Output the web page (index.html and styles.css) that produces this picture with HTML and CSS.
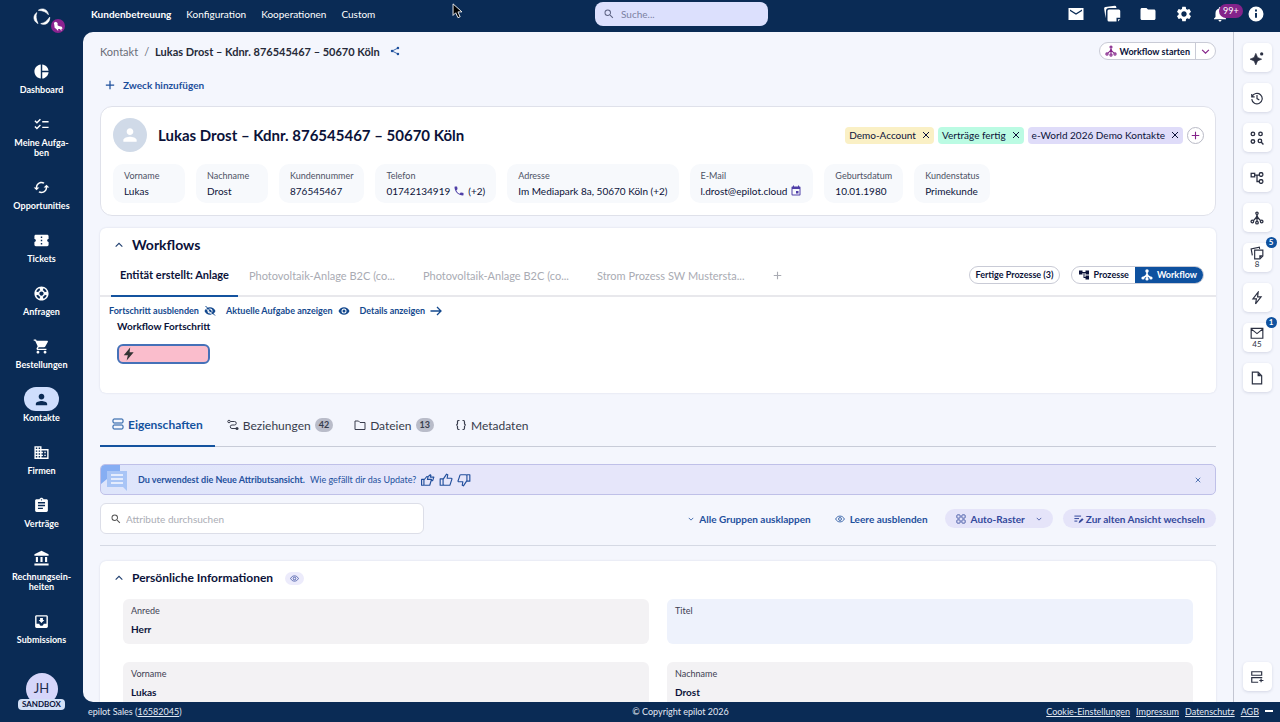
FILE: index.html
```html
<!DOCTYPE html>
<html lang="de">
<head>
  <meta charset="UTF-8" />
  <meta name="viewport" content="width=device-width, initial-scale=1.0"/>
  <title>Lukas Drost – epilot</title>
  <link rel="stylesheet" href="styles.css">
</head>
<body>

  <svg class="sprite" aria-hidden="true">
    <symbol id="i-pie" viewBox="0 0 24 24"><path d="M11 2v20c-5.070-.5-9-4.790-9-10s3.930-9.500 9-10zm2.030 0v8.990H22c-.47-4.740-4.240-8.520-8.970-8.990zm0 11.010V22c4.740-.47 8.500-4.250 8.970-8.990h-8.970z"/></symbol>
    <symbol id="i-checklist" viewBox="0 0 24 24"><path d="M22 7h-9v2h9V7zm0 8h-9v2h9v-2zM5.540 11L2 7.460l1.410-1.410 2.120 2.120 4.240-4.240 1.410 1.410L5.540 11zm0 8L2 15.460l1.410-1.410 2.120 2.120 4.240-4.240 1.410 1.410L5.540 19z"/></symbol>
    <symbol id="i-cycle" viewBox="0 0 24 24"><path d="M19 8l-4 4h3c0 3.310-2.690 6-6 6-1.010 0-1.970-.25-2.800-.7l-1.460 1.460C8.970 19.540 10.430 20 12 20c4.420 0 8-3.580 8-8h3l-4-4zM6 12c0-3.310 2.690-6 6-6 1.010 0 1.970.25 2.800.7l1.460-1.460C15.030 4.460 13.570 4 12 4c-4.420 0-8 3.580-8 8H1l4 4 4-4H6z"/></symbol>
    <symbol id="i-ticket" viewBox="0 0 24 24"><path d="M22 10V6c0-1.110-.9-2-2-2H4c-1.100 0-1.990.89-1.990 2v4c1.100 0 1.990.9 1.990 2s-.89 2-2 2v4c0 1.100.9 2 2 2h16c1.100 0 2-.9 2-2v-4c-1.100 0-2-.9-2-2s.9-2 2-2zm-9 7.500h-2v-2h2v2zm0-4.500h-2v-2h2v2zm0-4.500h-2v-2h2v2z"/></symbol>
    <symbol id="i-support" viewBox="0 0 24 24"><path d="M12 2C6.480 2 2 6.480 2 12s4.480 10 10 10 10-4.480 10-10S17.520 2 12 2zm7.460 7.120l-2.780 1.150c-.51-1.360-1.580-2.440-2.950-2.940l1.150-2.780c2.100.8 3.770 2.470 4.580 4.570zM12 15c-1.660 0-3-1.340-3-3s1.340-3 3-3 3 1.340 3 3-1.340 3-3 3zM9.130 4.540l1.170 2.780c-1.380.5-2.470 1.590-2.980 2.970L4.540 9.130c.81-2.110 2.480-3.780 4.590-4.590zM4.540 14.870l2.780-1.150c.51 1.380 1.590 2.460 2.970 2.960l-1.170 2.780c-2.100-.81-3.770-2.480-4.580-4.590zm10.340 4.590l-1.150-2.780c1.370-.51 2.450-1.590 2.950-2.970l2.780 1.170c-.81 2.100-2.480 3.770-4.580 4.580z"/></symbol>
    <symbol id="i-cart" viewBox="0 0 24 24"><path d="M7 18c-1.100 0-1.990.9-1.990 2S5.900 22 7 22s2-.9 2-2-.9-2-2-2zM1 2v2h2l3.600 7.590-1.350 2.450c-.16.28-.25.61-.25.960 0 1.100.9 2 2 2h12v-2H7.420c-.14 0-.25-.11-.25-.25l.03-.12.900-1.630h7.450c.75 0 1.410-.41 1.750-1.030l3.580-6.490A1 1 0 0 0 20 4H5.210l-.94-2H1zm16 16c-1.100 0-1.990.9-1.990 2s.89 2 1.990 2 2-.9 2-2-.9-2-2-2z"/></symbol>
    <symbol id="i-person" viewBox="0 0 24 24"><path d="M12 12c2.210 0 4-1.790 4-4s-1.790-4-4-4-4 1.790-4 4 1.790 4 4 4zm0 2c-2.670 0-8 1.340-8 4v2h16v-2c0-2.660-5.330-4-8-4z"/></symbol>
    <symbol id="i-building" viewBox="0 0 24 24"><path d="M12 7V3H2v18h20V7H12zM6 19H4v-2h2v2zm0-4H4v-2h2v2zm0-4H4V9h2v2zm0-4H4V5h2v2zm4 12H8v-2h2v2zm0-4H8v-2h2v2zm0-4H8V9h2v2zm0-4H8V5h2v2zm10 12h-8v-2h2v-2h-2v-2h2v-2h-2V9h8v10zm-2-8h-2v2h2v-2zm0 4h-2v2h2v-2z"/></symbol>
    <symbol id="i-clipboard" viewBox="0 0 24 24"><path d="M19 3h-4.180C14.400 1.840 13.300 1 12 1s-2.400.84-2.820 2H5c-1.100 0-2 .9-2 2v14c0 1.100.9 2 2 2h14c1.100 0 2-.9 2-2V5c0-1.100-.9-2-2-2zm-7 0c.55 0 1 .45 1 1s-.45 1-1 1-1-.45-1-1 .45-1 1-1zm2 14H7v-2h7v2zm3-4H7v-2h10v2zm0-4H7V7h10v2z"/></symbol>
    <symbol id="i-bank" viewBox="0 0 24 24"><path d="M4 10v7h3v-7H4zm6.500 0v7h3v-7h-3zM2 22h20v-3H2v3zm15-12v7h3v-7h-3zm-5-9L2 6v2h20V6l-10-5z"/></symbol>
    <symbol id="i-inbox" viewBox="0 0 24 24"><path d="M19 3H4.990C3.880 3 3 3.900 3 5v14c0 1.100.88 2 1.990 2H19c1.100 0 2-.9 2-2V5c0-1.100-.9-2-2-2zm0 12h-4c0 1.660-1.340 3-3 3s-3-1.340-3-3H4.990V5H19v10zm-3-5h-2V7h-4v3H8l4 4 4-4z"/></symbol>
    <symbol id="i-search" viewBox="0 0 24 24"><path d="M15.500 14h-.79l-.28-.27A6.470 6.470 0 0 0 16 9.500 6.500 6.500 0 1 0 9.500 16c1.610 0 3.090-.59 4.230-1.570l.27.28v.79l5 4.990L20.490 19l-4.990-5zm-6 0C7.010 14 5 11.990 5 9.500S7.010 5 9.500 5 14 7.010 14 9.500 11.990 14 9.500 14z"/></symbol>
    <symbol id="i-mail-fill" viewBox="0 0 24 24"><path d="M22 4H2v16h20V4zm-2 4l-8 5-8-5V6l8 5 8-5v2z"/></symbol>
    <symbol id="i-notes-fill" viewBox="0 0 24 24"><path d="M3.500 17.500L1.500 5a2 2 0 0 1 1.700-2.300L15.500 1a2 2 0 0 1 2.200 1.700l.2 1.300H8a4 4 0 0 0-4 4z"/><path d="M8 6h13a2 2 0 0 1 2 2v9h-5v5H8a2 2 0 0 1-2-2V8a2 2 0 0 1 2-2zm12 13h3l-3 3z"/></symbol>
    <symbol id="i-folder-fill" viewBox="0 0 24 24"><path d="M10 4H4c-1.100 0-1.990.9-1.990 2L2 18c0 1.100.9 2 2 2h16c1.100 0 2-.9 2-2V8c0-1.100-.9-2-2-2h-8l-2-2z"/></symbol>
    <symbol id="i-gear" viewBox="0 0 24 24"><path d="M19.140 12.940c.04-.3.060-.61.060-.94 0-.32-.02-.64-.07-.94l2.030-1.580a.49.49 0 0 0 .12-.61l-1.920-3.320a.488.488 0 0 0-.59-.22l-2.390.960c-.5-.38-1.030-.7-1.620-.94l-.36-2.540a.484.484 0 0 0-.48-.41h-3.840c-.24 0-.43.17-.47.41l-.36 2.540c-.59.24-1.130.57-1.620.94l-2.390-.96c-.22-.08-.47 0-.59.22L2.740 8.870c-.12.21-.08.47.12.61l2.030 1.580c-.05.3-.09.63-.09.94s.02.64.070.94l-2.030 1.580a.49.49 0 0 0-.12.61l1.920 3.320c.12.22.37.29.59.22l2.390-.96c.5.38 1.030.7 1.620.94l.36 2.540c.05.24.24.41.48.41h3.840c.24 0 .44-.17.47-.41l.36-2.540c.59-.24 1.130-.56 1.620-.94l2.390.960c.22.080.47 0 .59-.22l1.920-3.320c.12-.22.070-.47-.12-.61l-2.010-1.580zM12 15.600c-1.980 0-3.600-1.620-3.600-3.600s1.620-3.600 3.600-3.600 3.600 1.620 3.600 3.600-1.620 3.600-3.600 3.600z"/></symbol>
    <symbol id="i-bell" viewBox="0 0 24 24"><path d="M12 22c1.100 0 2-.9 2-2h-4c0 1.100.89 2 2 2zm6-6v-5c0-3.070-1.640-5.640-4.500-6.320V4c0-.83-.67-1.500-1.500-1.500s-1.500.67-1.500 1.500v.68C7.630 5.360 6 7.920 6 11v5l-2 2v1h16v-1l-2-2z"/></symbol>
    <symbol id="i-info" viewBox="0 0 24 24"><path d="M12 2a10 10 0 1 0 0 20 10 10 0 0 0 0-20zm1.300 15h-2.600v-6.500h2.600V17zm0-8.500h-2.600V6h2.600v2.500z"/></symbol>
    <symbol id="i-share" viewBox="0 0 24 24"><path d="M5 12L19 5M5 12l14 7" fill="none" stroke="currentColor" stroke-width="2"/><circle cx="5" cy="12" r="3"/><circle cx="19" cy="5" r="3"/><circle cx="19" cy="19" r="3"/></symbol>
    <symbol id="i-plus" viewBox="0 0 24 24"><path d="M12 2v20M2 12h20" fill="none" stroke="currentColor" stroke-width="3"/></symbol>
    <symbol id="i-fork" viewBox="0 0 24 24"><g fill="none" stroke="currentColor" stroke-width="2.200"><path d="M12 7v10M12 7c0 5-3.500 7-6 9M12 7c0 5 3.500 7 6 9"/><circle cx="12" cy="4" r="2"/><circle cx="4" cy="18" r="2.200"/><circle cx="20" cy="18" r="2.200"/><circle cx="12" cy="20" r="2.200"/></g></symbol>
    <symbol id="i-fork-fill" viewBox="0 0 24 24"><path d="M12 4v16M12 9c0 4-3 6-7 8M12 9c0 4 3 6 7 8" fill="none" stroke="currentColor" stroke-width="3"/><circle cx="12" cy="4" r="3.500"/><circle cx="4" cy="18" r="3.200"/><circle cx="20" cy="18" r="3.200"/><circle cx="12" cy="20" r="3.200"/></symbol>
    <symbol id="i-down" viewBox="0 0 24 24"><path d="M3 7.500l9 9 9-9" fill="none" stroke="currentColor" stroke-width="3.200"/></symbol>
    <symbol id="i-up" viewBox="0 0 24 24"><path d="M4 16l8-8 8 8" fill="none" stroke="currentColor" stroke-width="2.600"/></symbol>
    <symbol id="i-x" viewBox="0 0 24 24"><path d="M3 3l18 18M21 3L3 21" fill="none" stroke="currentColor" stroke-width="3"/></symbol>
    <symbol id="i-phone" viewBox="0 0 24 24"><path d="M6.620 10.790c1.440 2.830 3.760 5.140 6.590 6.590l2.200-2.200c.27-.27.67-.36 1.020-.24 1.120.37 2.330.57 3.570.57.55 0 1 .45 1 1V20c0 .55-.45 1-1 1-9.390 0-17-7.610-17-17 0-.55.45-1 1-1h3.500c.55 0 1 .45 1 1 0 1.250.2 2.450.57 3.570.11.35.030.74-.25 1.020l-2.200 2.200z"/></symbol>
    <symbol id="i-calendar" viewBox="0 0 24 24"><path d="M17 12h-5v5h5v-5zM16 1v2H8V1H6v2H5c-1.110 0-1.990.9-1.990 2L3 19a2 2 0 0 0 2 2h14c1.100 0 2-.9 2-2V5c0-1.100-.9-2-2-2h-1V1h-2zm3 18H5V8h14v11z"/></symbol>
    <symbol id="i-tree-fill" viewBox="0 0 24 24"><path d="M22 11V3h-7v3H9V3H2v8h7V8h2v10h4v3h7v-8h-7v3h-2V8h2v3z"/></symbol>
    <symbol id="i-tree" viewBox="0 0 24 24"><g fill="none" stroke="currentColor" stroke-width="2.200"><rect x="2" y="4" width="6" height="6"/><rect x="16" y="3" width="6" height="6" rx="2"/><rect x="16" y="15" width="6" height="6" rx="2"/><path d="M8 7h8M12 7v11h4"/></g></symbol>
    <symbol id="i-eye" viewBox="0 0 24 24"><path d="M12 4.500C7 4.500 2.730 7.610 1 12c1.730 4.390 6 7.500 11 7.500s9.270-3.110 11-7.500c-1.730-4.390-6-7.500-11-7.500zM12 17a5 5 0 1 1 0-10 5 5 0 0 1 0 10zm0-8a3 3 0 1 0 0 6 3 3 0 0 0 0-6z"/></symbol>
    <symbol id="i-eye-off" viewBox="0 0 24 24"><path d="M12 4.500C7 4.500 2.730 7.610 1 12c1.730 4.390 6 7.500 11 7.500s9.270-3.110 11-7.500c-1.730-4.390-6-7.500-11-7.500zM12 17a5 5 0 1 1 0-10 5 5 0 0 1 0 10zm0-8a3 3 0 1 0 0 6 3 3 0 0 0 0-6z"/><path d="M1 4l19 19" stroke="#fff" stroke-width="2"/><path d="M3 2l19 19" stroke="currentColor" stroke-width="2"/></symbol>
    <symbol id="i-eye-line" viewBox="0 0 24 24"><g fill="none" stroke="currentColor" stroke-width="2"><path d="M1.500 12C4 7 8 5 12 5s8 2 10.500 7c-2.500 5-6.500 7-10.500 7S4 17 1.500 12z"/><circle cx="12" cy="12" r="3.500"/></g></symbol>
    <symbol id="i-arrow" viewBox="0 0 24 24"><path d="M1 12h21M14 4l8 8-8 8" fill="none" stroke="currentColor" stroke-width="2.600"/></symbol>
    <symbol id="i-bolt-fill" viewBox="0 0 24 24"><path d="M14 1L3 14h7l-2 9L20 9h-7z"/></symbol>
    <symbol id="i-bolt" viewBox="0 0 24 24"><path d="M14 2L5 13.500h6L9.500 22 19 10h-6z" fill="none" stroke="currentColor" stroke-width="2"/></symbol>
    <symbol id="i-rows" viewBox="0 0 24 24"><g fill="none" stroke="currentColor" stroke-width="2"><rect x="2" y="2" width="20" height="8" rx="2"/><rect x="2" y="14" width="20" height="8" rx="2"/></g></symbol>
    <symbol id="i-route" viewBox="0 0 24 24"><g fill="none" stroke="currentColor" stroke-width="2"><circle cx="4" cy="5" r="2.500"/><path d="M7 5h8a3.500 3.500 0 0 1 0 7H10a3.500 3.500 0 0 0 0 7h8"/></g><circle cx="20" cy="19" r="3"/></symbol>
    <symbol id="i-folder" viewBox="0 0 24 24"><path d="M2 4h7l3 3h10v14H2z" fill="none" stroke="currentColor" stroke-width="2" stroke-linejoin="round"/></symbol>
    <symbol id="i-braces" viewBox="0 0 24 24"><path d="M9 3H7C5 3 5 4 5 6v3c0 2-1 3-3 3 2 0 3 1 3 3v3c0 2 0 3 2 3h2M15 3h2c2 0 2 1 2 3v3c0 2 1 3 3 3-2 0-3 1-3 3v3c0 2 0 3-2 3h-2" fill="none" stroke="currentColor" stroke-width="2.400"/></symbol>
    <symbol id="i-thumb" viewBox="0 0 24 24"><path d="M2 10h5v11H2zM7 11l6-9 2 1-1 6h7c1 0 1.500 1 1 2l-3 9c0 1-1 1-2 1H9l-2-1" fill="none" stroke="currentColor" stroke-width="2" stroke-linejoin="round"/></symbol>
    <symbol id="i-thumb-down" viewBox="0 0 24 24"><path d="M22 14h-5V3h5zM17 13l-6 9-2-1 1-6H3c-1 0-1.500-1-1-2l3-9c0-1 1-1 2-1h8l2 1" fill="none" stroke="currentColor" stroke-width="2" stroke-linejoin="round"/></symbol>
    <symbol id="i-thumbs" viewBox="0 0 24 24"><path d="M1 11h4v10H1zM5 12l5-6 2 1-1 4h7l-3 10H6M11 7l5-4 1 1-1 3h6l-2 6h-3" fill="none" stroke="currentColor" stroke-width="2" stroke-linejoin="round"/></symbol>
    <symbol id="i-grid" viewBox="0 0 24 24"><g fill="none" stroke="currentColor" stroke-width="2"><rect x="2" y="2" width="8" height="8" rx="2"/><rect x="14" y="2" width="8" height="8" rx="2"/><rect x="2" y="14" width="8" height="8" rx="2"/><rect x="14" y="14" width="8" height="8" rx="2"/></g></symbol>
    <symbol id="i-edit-list" viewBox="0 0 24 24"><path d="M1 5h16M1 11h11M1 17h7" fill="none" stroke="currentColor" stroke-width="2.400"/><path d="M11 22l1.500-5 7-7 3.500 3-7 7z"/></symbol>
    <symbol id="i-spark" viewBox="0 0 24 24"><path d="M10 4l3 7 7 3-7 3-3 7-3-7-7-3 7-3z" stroke="currentColor"/><circle cx="20" cy="5" r="2.800"/></symbol>
    <symbol id="i-history" viewBox="0 0 24 24"><path d="M3 5v5h5M3.500 10a9 9 0 1 1-.5 4M12 7v6l4 2.500" fill="none" stroke="currentColor" stroke-width="2"/></symbol>
    <symbol id="i-circles" viewBox="0 0 24 24"><g fill="none" stroke="currentColor" stroke-width="2.400"><circle cx="5" cy="5" r="3"/><circle cx="18" cy="5" r="3"/><circle cx="5" cy="18" r="3"/><circle cx="17" cy="17" r="3"/><path d="M19 19l4 4"/></g></symbol>
    <symbol id="i-notes" viewBox="0 0 24 24"><g fill="none" stroke="currentColor" stroke-width="2"><path d="M4 16L2 5l14-3 .5 3M8 7h14v10l-5 5H8z"/></g><path d="M16 16h6l-6 6z"/></symbol>
    <symbol id="i-mail" viewBox="0 0 24 24"><path d="M2 4h20v17H2zM2 5l10 8 10-8" fill="none" stroke="currentColor" stroke-width="2"/></symbol>
    <symbol id="i-file" viewBox="0 0 24 24"><path d="M4 2h10l6 6v14H4z" fill="none" stroke="currentColor" stroke-width="2"/><path d="M13 2v7h7z"/></symbol>
    <symbol id="i-row-add" viewBox="0 0 24 24"><path d="M3 3h17v6H3zM20 13H3v8h11M3 13h18M19 15v6M16 18h7" fill="none" stroke="currentColor" stroke-width="2"/></symbol>
  </svg>

  <div class="app">
    <aside class="sidebar">
      <a href="#" class="logo" aria-label="epilot">
        <svg viewBox="0 0 24 24" fill="#fff"><path id="blade" d="M7 3C13-1 20 2 20.500 9C17.500 5 13 3.500 7 3z" stroke="#fff" stroke-width=".8" stroke-linejoin="round"/><use href="#blade" transform="rotate(120 12 12)"/><use href="#blade" transform="rotate(240 12 12)"/></svg>
        <span class="logo-badge"><svg viewBox="0 0 24 24"><path d="M2 4l5-2 4 3v5l3 2 7 2 2 4-3 1 1 4h-2l-2-4h-5l1 4h-2l-3-4-4-3-1-7z" fill="#fff"/></svg></span>
      </a>
      <nav class="side-nav">
        <a href="#"><span class="pill"><svg class="icon"><use href="#i-pie"/></svg></span>Dashboard</a>
        <a href="#"><span class="pill"><svg class="icon"><use href="#i-checklist"/></svg></span>Meine Aufga-<br>ben</a>
        <a href="#"><span class="pill"><svg class="icon"><use href="#i-cycle"/></svg></span>Opportunities</a>
        <a href="#"><span class="pill"><svg class="icon"><use href="#i-ticket"/></svg></span>Tickets</a>
        <a href="#"><span class="pill"><svg class="icon"><use href="#i-support"/></svg></span>Anfragen</a>
        <a href="#"><span class="pill"><svg class="icon"><use href="#i-cart"/></svg></span>Bestellungen</a>
        <a href="#" class="active"><span class="pill"><svg class="icon"><use href="#i-person"/></svg></span>Kontakte</a>
        <a href="#"><span class="pill"><svg class="icon"><use href="#i-building"/></svg></span>Firmen</a>
        <a href="#"><span class="pill"><svg class="icon"><use href="#i-clipboard"/></svg></span>Verträge</a>
        <a href="#"><span class="pill"><svg class="icon"><use href="#i-bank"/></svg></span>Rechnungsein-<br>heiten</a>
        <a href="#"><span class="pill"><svg class="icon"><use href="#i-inbox"/></svg></span>Submissions</a>
      </nav>
      <button class="account"><span class="initials">JH</span><span class="sandbox">SANDBOX</span></button>
    </aside>

    <div class="page">
      <header class="topbar">
        <nav class="top-nav">
          <a href="#" class="active">Kundenbetreuung</a>
          <a href="#">Konfiguration</a>
          <a href="#">Kooperationen</a>
          <a href="#">Custom</a>
        </nav>
        <label class="search">
          <svg class="icon"><use href="#i-search"/></svg>
          <input type="search" placeholder="Suche..." aria-label="Suche">
        </label>
        <div class="top-actions">
          <button aria-label="Nachrichten"><svg class="icon"><use href="#i-mail-fill"/></svg></button>
          <button aria-label="Notizen"><svg class="icon"><use href="#i-notes-fill"/></svg></button>
          <button aria-label="Dateien"><svg class="icon"><use href="#i-folder-fill"/></svg></button>
          <button aria-label="Einstellungen"><svg class="icon"><use href="#i-gear"/></svg></button>
          <button aria-label="Benachrichtigungen"><svg class="icon"><use href="#i-bell"/></svg><span class="alert-count">99+</span></button>
          <button aria-label="Info"><svg class="icon"><use href="#i-info"/></svg></button>
        </div>
      </header>

      <div class="workspace">
        <main class="content">
          <div class="crumb-row">
            <div class="crumbs"><a href="#">Kontakt</a><span class="slash">/</span><strong>Lukas Drost – Kdnr. 876545467 – 50670 Köln</strong><button class="share" aria-label="Teilen"><svg class="icon"><use href="#i-share"/></svg></button></div>
            <div class="split">
              <button><svg class="icon"><use href="#i-fork"/></svg>Workflow starten</button>
              <button aria-label="Mehr"><svg class="icon"><use href="#i-down"/></svg></button>
            </div>
          </div>
          <button class="add-purpose"><svg class="icon"><use href="#i-plus"/></svg>Zweck hinzufügen</button>

          <section class="card contact">
            <div class="contact-head">
              <span class="avatar"><svg class="icon"><use href="#i-person"/></svg></span>
              <h1>Lukas Drost – Kdnr. 876545467 – 50670 Köln</h1>
              <div class="tags">
                <span class="tag yellow">Demo-Account <button aria-label="Demo-Account entfernen"><svg class="icon"><use href="#i-x"/></svg></button></span>
                <span class="tag green">Verträge fertig <button aria-label="Verträge fertig entfernen"><svg class="icon"><use href="#i-x"/></svg></button></span>
                <span class="tag violet">e-World 2026 Demo Kontakte <button aria-label="e-World entfernen"><svg class="icon"><use href="#i-x"/></svg></button></span>
                <button class="tag-add" aria-label="Tag hinzufügen"><svg class="icon"><use href="#i-plus"/></svg></button>
              </div>
            </div>
            <dl class="facts">
              <div><dt>Vorname</dt><dd>Lukas</dd></div>
              <div><dt>Nachname</dt><dd>Drost</dd></div>
              <div><dt>Kundennummer</dt><dd>876545467</dd></div>
              <div><dt>Telefon</dt><dd>01742134919 <svg class="icon"><use href="#i-phone"/></svg> (+2)</dd></div>
              <div><dt>Adresse</dt><dd>Im Mediapark 8a, 50670 Köln (+2)</dd></div>
              <div><dt>E-Mail</dt><dd>l.drost@epilot.cloud <svg class="icon"><use href="#i-calendar"/></svg></dd></div>
              <div><dt>Geburtsdatum</dt><dd>10.01.1980</dd></div>
              <div><dt>Kundenstatus</dt><dd>Primekunde</dd></div>
            </dl>
          </section>

          <section class="card workflows">
            <button class="section-head"><svg class="icon"><use href="#i-up"/></svg>Workflows</button>
            <div class="flow-bar">
              <div class="flow-tabs">
                <button class="active">Entität erstellt: Anlage</button>
                <button>Photovoltaik-Anlage B2C (co...</button>
                <button>Photovoltaik-Anlage B2C (co...</button>
                <button>Strom Prozess SW Mustersta...</button>
                <button class="flow-add" aria-label="Workflow hinzufügen"><svg class="icon"><use href="#i-plus"/></svg></button>
              </div>
              <div class="flow-actions">
                <button class="done">Fertige Prozesse (3)</button>
                <div class="toggle">
                  <button><svg class="icon"><use href="#i-tree-fill"/></svg>Prozesse</button>
                  <button class="active"><svg class="icon"><use href="#i-fork-fill"/></svg>Workflow</button>
                </div>
              </div>
            </div>
            <div class="flow-links">
              <button>Fortschritt ausblenden <svg class="icon"><use href="#i-eye-off"/></svg></button>
              <button>Aktuelle Aufgabe anzeigen <svg class="icon"><use href="#i-eye"/></svg></button>
              <button>Details anzeigen <svg class="icon"><use href="#i-arrow"/></svg></button>
            </div>
            <h3>Workflow Fortschritt</h3>
            <div class="progress"><svg class="icon"><use href="#i-bolt-fill"/></svg></div>
          </section>

          <nav class="tabs">
            <a href="#" class="active"><svg class="icon"><use href="#i-rows"/></svg>Eigenschaften</a>
            <a href="#"><svg class="icon"><use href="#i-route"/></svg>Beziehungen<span class="count">42</span></a>
            <a href="#"><svg class="icon"><use href="#i-folder"/></svg>Dateien<span class="count">13</span></a>
            <a href="#"><svg class="icon"><use href="#i-braces"/></svg>Metadaten</a>
          </nav>

          <div class="banner">
            <svg class="banner-art" viewBox="0 0 28 30"><path d="M0 3a3 3 0 0 1 3-3h16v14H6l-6 5z" fill="#86aef3"/><path d="M6 6h20v20l-4-4H6z" fill="#a9c5f6"/><path d="M10 10h12M10 14h12M10 18h12" stroke="#e4ecfd" stroke-width="2"/></svg>
            <strong>Du verwendest die Neue Attributsansicht.</strong>
            <span>Wie gefällt dir das Update?</span>
            <div class="votes">
              <button aria-label="Sehr gut"><svg class="icon"><use href="#i-thumbs"/></svg></button>
              <button aria-label="Gut"><svg class="icon"><use href="#i-thumb"/></svg></button>
              <button aria-label="Schlecht"><svg class="icon"><use href="#i-thumb-down"/></svg></button>
            </div>
            <button class="close" aria-label="Schließen"><svg class="icon"><use href="#i-x"/></svg></button>
          </div>

          <div class="tools">
            <label class="attr-search">
              <svg class="icon"><use href="#i-search"/></svg>
              <input type="search" placeholder="Attribute durchsuchen" aria-label="Attribute durchsuchen">
            </label>
            <div class="tool-buttons">
              <button><svg class="icon small"><use href="#i-down"/></svg>Alle Gruppen ausklappen</button>
              <button><svg class="icon"><use href="#i-eye-line"/></svg>Leere ausblenden</button>
              <button class="filled"><svg class="icon"><use href="#i-grid"/></svg>Auto-Raster<svg class="icon small"><use href="#i-down"/></svg></button>
              <button class="filled tight"><svg class="icon"><use href="#i-edit-list"/></svg>Zur alten Ansicht wechseln</button>
            </div>
          </div>

          <section class="card personal">
            <div class="personal-head">
              <button class="section-head"><svg class="icon"><use href="#i-up"/></svg>Persönliche Informationen</button>
              <button class="view" aria-label="Anzeigen"><svg class="icon"><use href="#i-eye-line"/></svg></button>
            </div>
            <div class="fields">
              <label class="field">Anrede<input type="text" value="Herr" readonly></label>
              <label class="field empty">Titel<input type="text" value="" readonly></label>
              <label class="field">Vorname<input type="text" value="Lukas" readonly></label>
              <label class="field">Nachname<input type="text" value="Drost" readonly></label>
            </div>
          </section>
        </main>

        <aside class="rail">
          <button aria-label="Assistent"><svg class="icon"><use href="#i-spark"/></svg></button>
          <button aria-label="Verlauf"><svg class="icon"><use href="#i-history"/></svg></button>
          <button aria-label="Apps"><svg class="icon"><use href="#i-circles"/></svg></button>
          <button aria-label="Prozesse"><svg class="icon"><use href="#i-tree"/></svg></button>
          <button aria-label="Workflows"><svg class="icon"><use href="#i-fork"/></svg></button>
          <button aria-label="Notizen"><svg class="icon"><use href="#i-notes"/></svg>8<span class="dot">5</span></button>
          <button aria-label="Automatisierung"><svg class="icon"><use href="#i-bolt"/></svg></button>
          <button aria-label="E-Mails"><svg class="icon"><use href="#i-mail"/></svg>45<span class="dot">1</span></button>
          <button aria-label="Dokumente"><svg class="icon"><use href="#i-file"/></svg></button>
          <button class="last" aria-label="Layout"><svg class="icon"><use href="#i-row-add"/></svg></button>
        </aside>
      </div>

      <footer class="footer">
        <span>epilot Sales (<a href="#">16582045</a>)</span>
        <span>© Copyright epilot 2026</span>
        <nav>
          <a href="#">Cookie-Einstellungen</a>
          <a href="#">Impressum</a>
          <a href="#">Datenschutz</a>
          <a href="#">AGB</a>
          <button class="minimize" aria-label="Minimieren"></button>
        </nav>
      </footer>
    </div>
  </div>

  <svg class="cursor" viewBox="0 0 12 18"><path d="M1 1v13l3-3 2.500 5.500 2.500-1L6.500 10H11z" fill="#000" stroke="#fff"/></svg>

</body>
</html>
```
FILE: styles.css
```css
* {
  box-sizing: border-box;
}

body {
  margin: 0;
  font-family: Lato, "Open Sans", sans-serif;
  font-size: 10px;
  color: #0b1239;
  background-color: #0a2b55;
}

button,
input {
  font: inherit;
  color: inherit;
  border: none;
  background: none;
  padding: 0;
  min-width: 0;
}

button {
  display: flex;
  align-items: center;
  cursor: pointer;
  white-space: nowrap;
}

a {
  color: inherit;
  text-decoration: none;
}

h1, h3, dl, dd {
  margin: 0;
}

.sprite {
  display: none;
}

.icon {
  width: 12px;
  height: 12px;
  fill: currentColor;
  flex-shrink: 0;
}

.cursor {
  position: absolute;
  top: 3px;
  left: 452px;
  width: 11px;
  height: 16px;
}

.app {
  display: flex;
  height: 100vh;
  overflow: hidden;
}

/* sidebar */
.sidebar {
  width: 83px;
  flex-shrink: 0;
  display: flex;
  flex-direction: column;
  align-items: center;
  padding: 8px 0 12px;
  color: #fff;
}

.logo {
  position: relative;
  height: 51px;
}

.logo > svg {
  width: 18px;
  height: 18px;
  overflow: visible;
}

.logo-badge {
  position: absolute;
  top: 11px;
  left: 18px;
  width: 14px;
  height: 14px;
  padding: 2px;
  border-radius: 50%;
  background-color: #8b2390;
  display: flex;
}

.side-nav {
  display: flex;
  flex-direction: column;
  gap: 17px;
}

.side-nav a {
  display: flex;
  flex-direction: column;
  align-items: center;
  font-size: 9px;
  font-weight: bold;
  line-height: 10px;
  text-align: center;
}

.side-nav .pill {
  width: 35px;
  height: 24px;
  margin-bottom: 2px;
  border-radius: 12px;
  display: flex;
  align-items: center;
  justify-content: center;
}

.side-nav .icon {
  width: 17px;
  height: 17px;
}

.side-nav .active .pill {
  background-color: #cfdefd;
  color: #0a2b55;
}

.account {
  margin-top: auto;
  flex-direction: column;
}

.initials {
  width: 32px;
  height: 32px;
  border-radius: 50%;
  background-color: #d6d6fa;
  color: #1f2b4d;
  font-size: 13px;
  line-height: 30px;
}

.sandbox {
  margin-top: -6px;
  padding: 0 4px;
  border-radius: 4px;
  background-color: #d3e0f7;
  color: #0b1239;
  font-size: 8px;
  font-weight: bold;
  line-height: 11px;
}

/* top bar */
.page {
  flex: 1;
  min-width: 0;
  display: flex;
  flex-direction: column;
}

.topbar {
  height: 32px;
  flex-shrink: 0;
  display: grid;
  grid-template-columns: 1fr auto 1fr;
  align-items: center;
  padding: 0 8px 4px;
  color: #fff;
}

.top-nav {
  display: flex;
  gap: 15px;
}

.top-nav .active {
  font-weight: bold;
}

.search {
  width: 173px;
  height: 24px;
  display: flex;
  align-items: center;
  gap: 6px;
  padding: 0 8px;
  border-radius: 8px;
  background-color: #dce0fd;
  color: #5d6384;
}

.search input,
.attr-search input {
  flex: 1;
  outline: none;
}

.search input::placeholder {
  color: #7b80a3;
}

.top-actions {
  display: flex;
  justify-content: flex-end;
  gap: 18px;
  padding-right: 7px;
}

.top-actions button {
  position: relative;
}

.top-actions .icon {
  width: 18px;
  height: 18px;
}

.alert-count {
  position: absolute;
  top: -1px;
  left: 8px;
  padding: 0 4px;
  border-radius: 7px;
  background-color: #84238a;
  font-size: 9px;
  line-height: 14px;
}

/* workspace */
.workspace {
  flex: 1;
  min-height: 0;
  display: flex;
  overflow: hidden;
  border-radius: 10px 0 0 10px;
  background-color: #f4f6fd;
}

.content {
  flex: 1;
  min-width: 0;
  overflow: hidden;
  padding: 10px 17px 0;
}

.crumb-row {
  display: flex;
  align-items: center;
  justify-content: space-between;
}

.crumbs {
  display: flex;
  align-items: center;
  font-size: 11px;
  color: #6a6d78;
}

.crumbs strong {
  color: #262a38;
}

.slash {
  padding: 0 6px;
}

.share {
  margin-left: 10px;
  color: #1d4f9c;
}

.share .icon {
  width: 10px;
  height: 10px;
}

.split,
.toggle {
  display: flex;
  border: 1px solid #c9cbd6;
  border-radius: 9px;
  background-color: #fff;
  font-size: 9px;
  font-weight: bold;
  overflow: hidden;
}

.split button {
  height: 16px;
  gap: 3px;
  padding: 0 5px;
}

.split button + button {
  border-left: 1px solid #c9cbd6;
}

.split .icon {
  color: #84238a;
}

.split button + button .icon {
  width: 9px;
  height: 9px;
}

.add-purpose {
  gap: 8px;
  margin-top: 17px;
  padding-left: 5px;
  line-height: 16px;
  color: #1d4f9c;
  font-weight: bold;
}

.add-purpose .icon {
  width: 10px;
  height: 10px;
}

.card {
  background-color: #fff;
  border-radius: 6px;
  box-shadow: 0 0 2px rgba(30, 40, 90, 0.15);
}

.contact {
  margin-top: 13px;
  padding: 11px 11px 12px 12px;
  border: 1px solid #dfe1ea;
  border-radius: 12px;
  box-shadow: none;
}

.contact-head {
  display: flex;
  align-items: center;
  gap: 11px;
}

.avatar {
  width: 34px;
  height: 34px;
  border-radius: 50%;
  background-color: #d0dae8;
  color: #fff;
  display: flex;
  align-items: center;
  justify-content: center;
}

.avatar .icon {
  width: 20px;
  height: 20px;
}

.contact h1 {
  font-size: 15px;
}

.tags {
  margin-left: auto;
  display: flex;
  align-items: center;
  gap: 4px;
}

.tag {
  display: flex;
  align-items: center;
  gap: 6px;
  padding: 0 4px;
  border-radius: 4px;
  line-height: 17px;
}

.tag .icon {
  width: 8px;
  height: 8px;
}

.yellow {
  background-color: #faf0c5;
}

.green {
  background-color: #bbfbe3;
}

.violet {
  background-color: #dfdcf9;
}

.tag-add {
  width: 17px;
  height: 17px;
  justify-content: center;
  border: 1px solid #b9bac6;
  border-radius: 50%;
  color: #84238a;
}

.tag-add .icon {
  width: 9px;
  height: 9px;
}

.facts {
  display: flex;
  gap: 11px;
  margin-top: 12px;
}

.facts div {
  min-width: 72px;
  padding: 4px 11px;
  border-radius: 10px;
  background-color: #f7f9fc;
}

.facts dt {
  font-size: 9px;
  line-height: 15px;
  color: #4d5265;
}

.facts dd {
  display: flex;
  align-items: center;
  gap: 3px;
  line-height: 16px;
  white-space: nowrap;
}

.facts .icon {
  color: #5040a8;
}

/* workflows */
.workflows {
  margin-top: 12px;
  padding-bottom: 29px;
}

.section-head {
  gap: 8px;
  padding-left: 14px;
  font-size: 14px;
  font-weight: bold;
  line-height: 18px;
}

.section-head .icon {
  width: 10px;
  height: 10px;
  color: #1d3d6e;
}

.workflows .section-head {
  padding-top: 8px;
}

.flow-bar {
  display: flex;
  justify-content: space-between;
  align-items: center;
  padding: 0 12px 0 11px;
  border-bottom: 2px solid #e8e8ec;
}

.flow-tabs {
  display: flex;
  font-size: 11px;
  color: #a9abb3;
}

.flow-tabs button {
  height: 43px;
  padding: 0 9px;
  margin-right: 10px;
  margin-bottom: -2px;
}

.flow-tabs .active {
  margin-right: 2px;
  color: #0b1239;
  font-weight: bold;
  border-bottom: 2px solid #14539f;
}

.flow-tabs .icon {
  width: 9px;
  height: 9px;
}

.flow-actions {
  display: flex;
  gap: 11px;
}

.flow-actions button {
  height: 16px;
}

.flow-actions .done {
  height: 18px;
  padding: 0 5px;
  border: 1px solid #c9cbd6;
  border-radius: 9px;
  font-size: 9px;
  font-weight: bold;
}

.toggle button {
  gap: 4px;
  padding: 0 6px;
}

.toggle .active {
  background-color: #0e519f;
  color: #fff;
}

.flow-links {
  display: flex;
  gap: 10px;
  padding: 7px 9px 0;
  color: #14498e;
  font-size: 9px;
  font-weight: bold;
}

.flow-links button {
  gap: 5px;
  line-height: 14px;
}

.workflows h3 {
  padding-left: 17px;
  font-size: 10px;
  line-height: 17px;
}

.progress {
  width: 93px;
  height: 20px;
  margin: 9px 17px 0;
  padding: 0 3px;
  display: flex;
  align-items: center;
  border: 2px solid #4571b8;
  border-radius: 6px;
  background-color: #fabdcc;
  color: #333;
}

.progress .icon {
  width: 14px;
  height: 14px;
}

/* tabs */
.tabs {
  display: flex;
  margin-top: 10px;
  border-bottom: 1px solid #c8ccd8;
  font-size: 12px;
  color: #383c4c;
}

.tabs a {
  height: 44px;
  display: flex;
  align-items: center;
  gap: 4px;
  padding: 0 12px;
  margin-bottom: -1px;
}

.tabs a + a {
  padding-right: 9px;
}

.tabs .active {
  color: #14539f;
  font-weight: bold;
  border-bottom: 2px solid #14539f;
}

.count {
  padding: 0 4px;
  border-radius: 7px;
  background-color: #b9bcc9;
  font-size: 9px;
  font-weight: bold;
  line-height: 14px;
}

.banner {
  height: 31px;
  margin-top: 17px;
  display: flex;
  align-items: center;
  gap: 5px;
  padding-right: 14px;
  overflow: hidden;
  border: 1px solid #bfc0e8;
  border-radius: 5px;
  background: linear-gradient(90deg, #dee5fb, #e6e6fa 30%);
  color: #23509d;
  font-size: 9px;
}

.banner-art {
  width: 28px;
  height: 30px;
  margin-right: 4px;
}

.votes {
  display: flex;
  gap: 4px;
}

.votes .icon {
  width: 14px;
  height: 14px;
}

.close {
  margin-left: auto;
}

.close .icon {
  width: 6px;
  height: 6px;
}

.tools {
  display: flex;
  align-items: center;
  justify-content: space-between;
  margin-top: 8px;
  padding-bottom: 11px;
  border-bottom: 1px solid #d5d9e4;
}

.attr-search {
  width: 29%;
  height: 31px;
  display: flex;
  align-items: center;
  gap: 4px;
  padding: 0 9px;
  border: 1px solid #dcdee8;
  border-radius: 6px;
  background-color: #fff;
  color: #555;
}

.attr-search input::placeholder {
  color: #abadb5;
}

.tool-buttons {
  display: flex;
  gap: 10px;
  color: #1f509e;
  font-weight: bold;
}

.tool-buttons button {
  gap: 5px;
  height: 19px;
  padding: 0 7px;
}

.tool-buttons .icon {
  width: 10px;
  height: 10px;
}

.tool-buttons .small {
  width: 6px;
  height: 6px;
}

.tool-buttons .filled {
  padding: 0 11px;
  border-radius: 10px;
  background-color: #e5e4f9;
  color: #33489c;
}

.filled .small {
  margin-left: 6px;
}

.tool-buttons .tight {
  gap: 2px;
}

/* personal information */
.personal {
  margin-top: 15px;
  padding: 8px 23px 20px 0;
}

.personal-head {
  display: flex;
  align-items: center;
  gap: 12px;
}

.personal .section-head {
  font-size: 12px;
}

.view {
  padding: 2px 5px;
  border-radius: 7px;
  background-color: #ecebfb;
  color: #33489c;
}

.view .icon {
  width: 9px;
  height: 9px;
}

.fields {
  display: grid;
  grid-template-columns: 1fr 1fr;
  gap: 18px;
  padding: 12px 0 0 23px;
}

.field {
  display: flex;
  flex-direction: column;
  height: 45px;
  padding: 5px 8px;
  border-radius: 6px;
  background-color: #f3f2f4;
  color: #3d4052;
  font-size: 9px;
  line-height: 14px;
}

.field input {
  height: 22px;
  font-size: 10px;
  font-weight: bold;
  color: #0b1239;
}

.empty {
  background-color: #eef2fc;
}

/* right rail */
.rail {
  width: 47px;
  flex-shrink: 0;
  display: flex;
  flex-direction: column;
  align-items: center;
  gap: 11px;
  padding: 11px 0;
  border-left: 1px solid #c3c6d2;
  color: #2b3042;
}

.rail button {
  position: relative;
  width: 29px;
  height: 29px;
  flex-direction: column;
  justify-content: center;
  border-radius: 5px;
  background-color: #fff;
  box-shadow: 0 1px 3px rgba(30, 40, 90, 0.15);
  font-size: 8px;
  line-height: 9px;
}

.rail .icon {
  width: 14px;
  height: 14px;
}

.rail .last {
  margin-top: auto;
}

.dot {
  position: absolute;
  top: -6px;
  right: -5px;
  width: 11px;
  border-radius: 50%;
  background-color: #0e519f;
  color: #fff;
  font-weight: bold;
  line-height: 11px;
}

/* footer */
.footer {
  height: 20px;
  flex-shrink: 0;
  display: grid;
  grid-template-columns: 1fr auto 1fr;
  align-items: center;
  padding: 0 7px 2px 5px;
  color: #e3e9f4;
  font-size: 9px;
}

.footer a {
  text-decoration: underline;
}

.footer nav {
  display: flex;
  justify-content: flex-end;
  align-items: center;
  gap: 6px;
}

.minimize {
  width: 8px;
  height: 2px;
  background-color: #fff;
}
```
